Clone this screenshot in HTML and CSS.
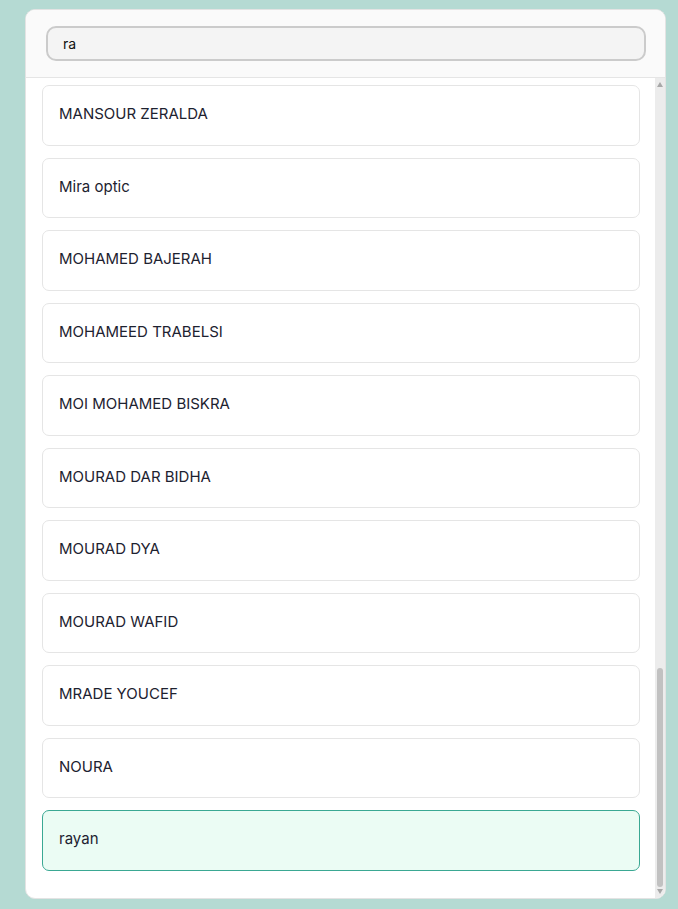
FILE: index.html
```html
<!DOCTYPE html>
<html lang="fr">
<head>
<meta charset="utf-8">
<title>Clients</title>
<link rel="stylesheet" href="styles.css">
</head>
<body>
<div class="panel">
  <div class="search-bar">
    <input class="search-input" type="text" value="ra">
  </div>
  <div class="body-row">
    <div class="scroller">
      <ul class="list">
        <li class="item">MANSOUR ZERALDA</li>
        <li class="item">Mira optic</li>
        <li class="item">MOHAMED BAJERAH</li>
        <li class="item">MOHAMEED TRABELSI</li>
        <li class="item">MOI MOHAMED BISKRA</li>
        <li class="item">MOURAD DAR BIDHA</li>
        <li class="item">MOURAD DYA</li>
        <li class="item">MOURAD WAFID</li>
        <li class="item">MRADE YOUCEF</li>
        <li class="item">NOURA</li>
        <li class="item item-selected">rayan</li>
      </ul>
    </div>
    <div class="scrollbar" aria-hidden="true">
      <div class="sb-btn"><span class="sb-arrow-up"></span></div>
      <div class="sb-track"><div class="sb-thumb"></div></div>
      <div class="sb-btn"><span class="sb-arrow-down"></span></div>
    </div>
  </div>
</div>
</body>
</html>
```
FILE: styles.css
```css
html, body {
  height: 100%;
}
body {
  margin: 0;
  background: #b5dad3;
  font-family: Inter, "Noto Sans", sans-serif;
  box-sizing: border-box;
  padding: 9px 12px 10px 25px;
}
.panel {
  height: 100%;
  background: #ffffff;
  border: 1px solid #e3e3e3;
  border-radius: 10px;
  overflow: hidden;
  display: flex;
  flex-direction: column;
  box-sizing: border-box;
}
.search-bar {
  background: #fafafa;
  border-bottom: 1px solid #e5e5e5;
  padding: 16px 19px 16px 20px;
  flex: none;
}
.search-input {
  display: block;
  width: 100%;
  box-sizing: border-box;
  height: 35px;
  border: 2px solid #cbcbcb;
  border-radius: 10px;
  background: #f4f4f4;
  padding: 0 15px;
  font-family: Inter, "Noto Sans", sans-serif;
  font-size: 14px;
  color: #111111;
  outline: none;
}
.body-row {
  flex: 1;
  min-height: 0;
  display: flex;
}
.scroller {
  flex: 1;
  min-width: 0;
  overflow: hidden;
}
.scrollbar {
  flex: none;
  width: 10px;
  background: #ececec;
  display: flex;
  flex-direction: column;
}
.sb-btn {
  flex: none;
  height: 10px;
  display: flex;
  align-items: center;
  justify-content: center;
}
.sb-arrow-up {
  width: 0;
  height: 0;
  border-left: 3.5px solid transparent;
  border-right: 3.5px solid transparent;
  border-bottom: 5px solid #a8a8a8;
  margin-top: 2px;
}
.sb-arrow-down {
  width: 0;
  height: 0;
  border-left: 3.5px solid transparent;
  border-right: 3.5px solid transparent;
  border-top: 5px solid #a8a8a8;
  margin-bottom: 3px;
}
.sb-track {
  flex: 1;
  display: flex;
  flex-direction: column;
  justify-content: flex-end;
  padding: 0 2px 1px;
}
.sb-thumb {
  height: 219px;
  background: #c1c1c1;
  border-radius: 3px;
}
.list {
  list-style: none;
  margin: 0;
  padding: 7px 15px 28px 16px;
  display: flex;
  flex-direction: column;
  gap: 12px;
}
.item {
  border: 1px solid #e5e5e5;
  border-radius: 7px;
  background: #ffffff;
  padding: 17px 16px 19px;
  font-size: 15px;
  line-height: 22.5px;
  color: #1d2230;
}
.item-selected {
  background: #ebfcf4;
  border-color: #3aa893;
}
```
